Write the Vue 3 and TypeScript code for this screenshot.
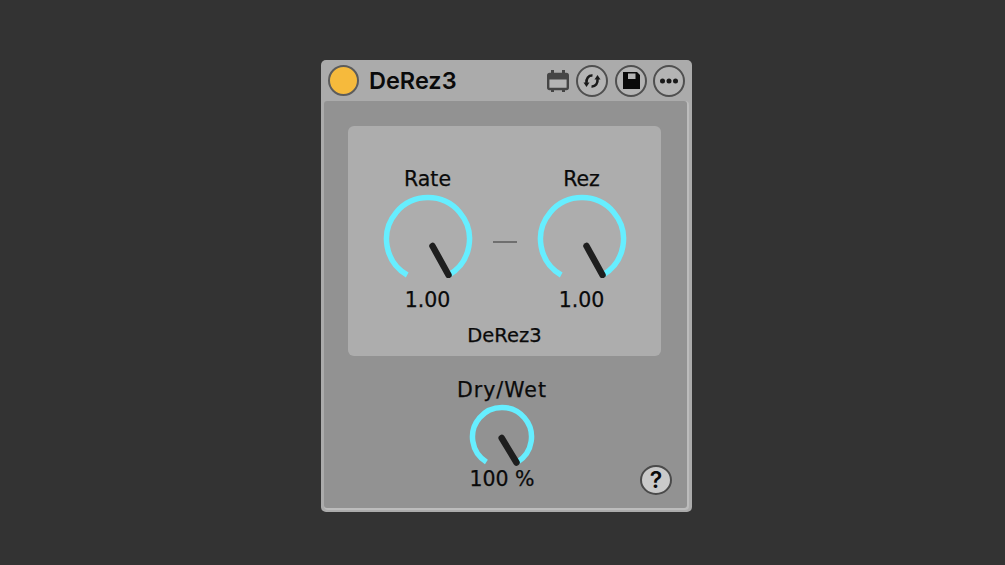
<script setup lang="ts">
interface Knob { label: string; value: string }
const pair: Knob[] = [
  { label: 'Rate', value: '1.00' },
  { label: 'Rez', value: '1.00' },
]
</script>

<template>
  <div class="page">
    <section class="device">
      <header class="head">
        <span class="power"></span>
        <h1 class="title">DeRez3</h1>
        <div class="tools">
          <svg class="cal" width="24" height="24" viewBox="0 0 24 24">
            <rect x="2.200" y="5" width="19.600" height="15" rx="1.500" fill="#b4b4b4" stroke="#454545" stroke-width="2.400" />
            <rect x="2.500" y="5" width="19" height="5.500" fill="#454545" />
            <path d="M6.500 1v4M17.500 1v4M6.500 20v3M17.500 20v3" stroke="#454545" stroke-width="3" />
          </svg>
          <span class="round">
            <svg width="32" height="32" viewBox="0 0 32 32">
              <path d="M16.500 10.500C12.500 10.200 10 13.500 10.500 18" fill="none" stroke="#1a1a1a" stroke-width="2.600" />
              <path d="M7.500 17.500h6l-3 4.500z" fill="#1a1a1a" />
              <path d="M15.500 21.500C19.500 21.800 22 18.500 21.500 14" fill="none" stroke="#1a1a1a" stroke-width="2.600" />
              <path d="M24.500 14.500h-6l3-4.500z" fill="#1a1a1a" />
            </svg>
          </span>
          <span class="round">
            <svg width="32" height="32" viewBox="0 0 32 32">
              <path d="M8 7h14l3 3v14H8z" fill="#0a0a0a" />
              <rect x="13" y="8.500" width="7.500" height="5.500" fill="#b4b4b4" />
            </svg>
          </span>
          <span class="round">
            <svg width="32" height="32" viewBox="0 0 32 32">
              <circle cx="9.500" cy="16" r="2.500" fill="#1a1a1a" />
              <circle cx="16" cy="16" r="2.500" fill="#1a1a1a" />
              <circle cx="22.500" cy="16" r="2.500" fill="#1a1a1a" />
            </svg>
          </span>
        </div>
      </header>

      <main class="body">
        <div class="panel">
          <div class="row">
            <template v-for="(k, i) in pair" :key="k.label">
              <span v-if="i === 1" class="dash"></span>
              <div class="knob">
                <span class="label">{{ k.label }}</span>
                <svg class="dial" width="90" height="84" viewBox="0 0 90 84">
                  <path d="M24.200 81A41.500 41.500 0 1 1 65.800 81" fill="none" stroke="#66eeff" stroke-width="5.500" />
                  <path d="M49.500 52L65.500 81" fill="none" stroke="#1e1e1e" stroke-width="6.500" stroke-linecap="round" />
                </svg>
                <span class="label value">{{ k.value }}</span>
              </div>
            </template>
          </div>
          <span class="label name">DeRez3</span>
        </div>

        <div class="knob wet">
          <span class="label drywet">Dry/Wet</span>
          <svg class="dial-small" width="66" height="64" viewBox="0 0 66 64">
            <path d="M17.400 58A29.500 29.500 0 1 1 48.600 58" fill="none" stroke="#66eeff" stroke-width="5.500" />
            <path d="M32.700 34L47.500 58.500" fill="none" stroke="#1e1e1e" stroke-width="6.500" stroke-linecap="round" />
          </svg>
          <span class="label value-small">100 %</span>
        </div>

        <span class="help">?</span>
      </main>
    </section>
  </div>
</template>

<style>
html, body { margin: 0; background: #333333; }
</style>

<style scoped>
.page {
  width: 1005px;
  height: 565px;
  padding: 60px 0 0 321px;
  box-sizing: border-box;
  background: #333333;
  font-family: "DejaVu Sans", Inter, sans-serif;
}
.device {
  width: 371px;
  height: 452px;
  box-sizing: border-box;
  background: #ababab;
  border-radius: 5px;
  padding: 0 5px 4px 3px;
  display: flex;
  flex-direction: column;
}
.head {
  height: 41px;
  display: flex;
  align-items: center;
  padding-left: 4px;
  flex: none;
}
.power {
  width: 27px;
  height: 27px;
  border-radius: 50%;
  background: #f6ba3c;
  border: 2px solid #5c5c5c;
}
.title {
  margin: 0 0 0 10px;
  font-family: Inter, sans-serif;
  font-size: 23.500px;
  font-weight: 600;
  color: #0a0a0a;
  line-height: 1;
}
.tools {
  margin-left: auto;
  display: flex;
  align-items: center;
  gap: 6.500px;
  margin-right: 2px;
}
.cal { margin-right: 0; }
.round {
  width: 32px;
  height: 32px;
  box-sizing: border-box;
  border: 2.500px solid #4f4f4f;
  border-radius: 50%;
  display: flex;
  align-items: center;
  justify-content: center;
  background: #b4b4b4;
}
.round svg { flex: none; }
.body {
  flex: 1;
  position: relative;
  background: #929292;
  border-radius: 3px;
  box-shadow: 1px 1px 0 1px #bcbcbc;
  display: flex;
  flex-direction: column;
  align-items: center;
  padding: 25px 2px 0 0;
}
.panel {
  width: 313px;
  height: 230px;
  background: #adadad;
  border-radius: 6px;
  display: flex;
  flex-direction: column;
  align-items: center;
  padding-top: 40px;
  box-sizing: border-box;
}
.row {
  display: flex;
  align-items: center;
  gap: 20px;
}
.knob {
  display: flex;
  flex-direction: column;
  align-items: center;
  width: 90px;
}
.label {
  font-size: 20.500px;
  line-height: 26px;
  color: #0a0a0a;
  white-space: nowrap;
  -webkit-text-stroke: 0.25px #0a0a0a;
}
.dial { margin-top: 2px; }
.value { margin-top: 9px; }
.dash {
  width: 24px;
  height: 2px;
  background: #6f6f6f;
  margin-top: 4px;
}
.name { margin-top: 10px; font-size: 19.500px; }
.wet { margin-top: 21px; margin-left: -5px; }
.drywet { letter-spacing: 1px; }
.dial-small { margin-top: 1px; }
.value-small { margin-top: -2px; }
.help {
  position: absolute;
  right: 15px;
  bottom: 13px;
  width: 32px;
  height: 30px;
  box-sizing: border-box;
  border: 2px solid #4a4a4a;
  border-radius: 50%;
  background: #cacaca;
  color: #0a0a0a;
  font-family: Inter, sans-serif;
  font-size: 23px;
  font-weight: 600;
  display: flex;
  align-items: center;
  justify-content: center;
}
</style>
